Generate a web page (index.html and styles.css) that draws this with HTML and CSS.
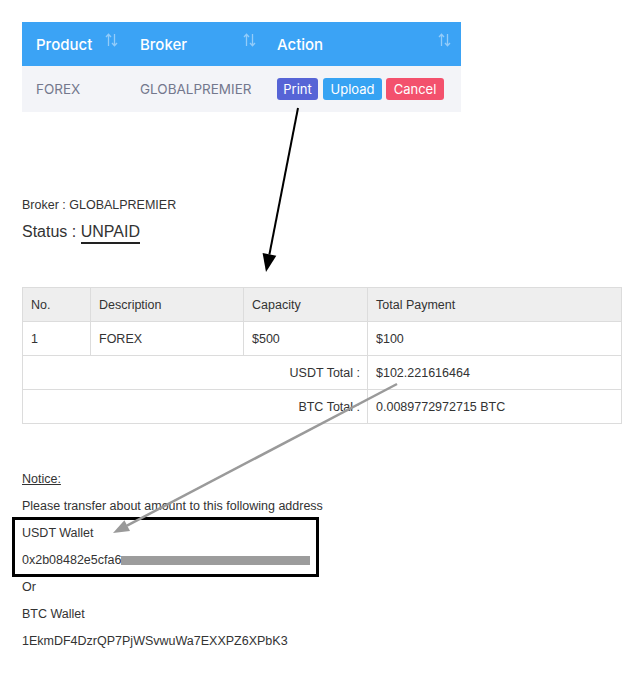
FILE: index.html
```html
<!DOCTYPE html>
<html>
<head>
<meta charset="utf-8">
<link rel="stylesheet" href="styles.css">
</head>
<body>
<div class="page">
  <table class="grid">
    <thead>
      <tr>
        <th class="c-product"><div class="th-in"><span>Product</span><svg class="sort" viewBox="0 0 13 14"><path d="M3.5 13V1.5M1 4l2.5-2.7L6 4M9.5 1v11.5M7 10l2.5 2.7L12 10"/></svg></div></th>
        <th class="c-broker"><div class="th-in"><span>Broker</span><svg class="sort" viewBox="0 0 13 14"><path d="M3.5 13V1.5M1 4l2.5-2.7L6 4M9.5 1v11.5M7 10l2.5 2.7L12 10"/></svg></div></th>
        <th class="c-action"><div class="th-in"><span>Action</span><svg class="sort" viewBox="0 0 13 14"><path d="M3.5 13V1.5M1 4l2.5-2.7L6 4M9.5 1v11.5M7 10l2.5 2.7L12 10"/></svg></div></th>
      </tr>
    </thead>
    <tbody>
      <tr>
        <td>FOREX</td>
        <td>GLOBALPREMIER</td>
        <td><div class="btns"><span class="btn btn-print">Print</span><span class="btn btn-upload">Upload</span><span class="btn btn-cancel">Cancel</span></div></td>
      </tr>
    </tbody>
  </table>

  <div class="broker">Broker : GLOBALPREMIER</div>
  <div class="status">Status : <span class="unpaid">UNPAID</span></div>

  <table class="invoice">
    <thead>
      <tr><th class="w-no">No.</th><th class="w-desc">Description</th><th class="w-cap">Capacity</th><th>Total Payment</th></tr>
    </thead>
    <tbody>
      <tr><td>1</td><td>FOREX</td><td>$500</td><td>$100</td></tr>
      <tr><td colspan="3" class="label">USDT Total :</td><td>$102.221616464</td></tr>
      <tr><td colspan="3" class="label">BTC Total :</td><td>0.0089772972715 BTC</td></tr>
    </tbody>
  </table>

  <div class="notice">
    <p><span class="u">Notice:</span></p>
    <p>Please transfer about amount to this following address</p>
    <div class="wallet-box">
      <p>USDT Wallet</p>
      <p class="addr">0x2b08482e5cfa6<span class="redact"></span></p>
    </div>
    <p>Or</p>
    <p>BTC Wallet</p>
    <p>1EkmDF4DzrQP7PjWSvwuWa7EXXPZ6XPbK3</p>
  </div>
</div>

<svg class="arrows" width="630" height="673" viewBox="0 0 630 673">
  <line x1="298" y1="108" x2="269.4" y2="254.5" stroke="#000" stroke-width="2"/>
  <polygon points="276.3,255.7 262.6,253 266,272" fill="#000"/>
  <line x1="397" y1="384" x2="127" y2="525.6" stroke="#9a9a9a" stroke-width="2.5"/>
  <polygon points="130,531 124.4,520.3 113,533" fill="#9a9a9a"/>
</svg>
</body>
</html>
```

FILE: styles.css
```css
html, body {
  margin: 0;
  padding: 0;
  background: #fff;
}
.page {
  padding: 22px 8px 40px 22px;
  font-family: "Liberation Sans", Arial, sans-serif;
  color: #333;
}
.grid {
  border-collapse: collapse;
  width: 439px;
  font-family: Inter, "Open Sans", sans-serif;
}
.grid th {
  background: #3ba3f5;
  color: #fff;
  font-weight: 500;
  font-size: 15px;
  height: 44px;
  padding: 0 0 0 14px;
  text-align: left;
}
.grid .c-product { width: 82px; padding-right: 8px; }
.grid .c-broker { width: 116px; padding-right: 7px; }
.grid .c-action { padding-right: 10px; }
.th-in {
  display: flex;
  justify-content: space-between;
  align-items: center;
}
.sort {
  width: 13px;
  height: 14px;
  fill: none;
  stroke: rgba(255,255,255,0.45);
  stroke-width: 1.3;
  margin-top: -8px;
}
.grid td {
  background: #f3f4f8;
  color: #74788d;
  font-size: 13.5px;
  height: 46px;
  padding: 0 0 0 14px;
}
.btns {
  display: flex;
  gap: 5px;
}
.btn {
  display: inline-flex;
  align-items: center;
  justify-content: center;
  height: 22px;
  border-radius: 3px;
  color: #fff;
  font-size: 13px;
  padding: 0 7px;
}
.btn-print { background: #5664d6; width: 27px; }
.btn-upload { background: #36a3f3; width: 45px; }
.btn-cancel { background: #f3516d; width: 44px; margin-left: -1px; }

.broker {
  margin-top: 85px;
  font-size: 12.5px;
  line-height: 16px;
  color: #333;
}
.status {
  margin-top: 9px;
  font-size: 16px;
  line-height: 20px;
  color: #333;
}
.unpaid {
  border-bottom: 2.5px solid #222;
  padding-bottom: 2px;
}
.invoice {
  margin-top: 45px;
  width: 600px;
  border-collapse: collapse;
  font-size: 12.5px;
  color: #333;
}
.invoice th, .invoice td {
  border: 1px solid #dcdcdc;
  text-align: left;
  font-weight: normal;
  padding: 0 8px;
  height: 33px;
}
.invoice th { background: #eeeeee; }
.invoice .w-no { width: 51px; }
.invoice .w-desc { width: 136px; }
.invoice .w-cap { width: 107px; }
.invoice td.label { text-align: right; padding-right: 7px; }

.notice {
  margin-top: 42px;
  font-size: 12.5px;
  color: #333;
}
.notice p {
  margin: 0;
  line-height: 27px;
  white-space: nowrap;
}
.u { text-decoration: underline; }
.wallet-box {
  border: 3px solid #000;
  margin: -3px 0 -3px -10px;
  padding-left: 7px;
  width: 294px;
}
.redact {
  background: #9c9c9c;
  display: inline-block;
  width: 189px;
  height: 9px;
  vertical-align: -1px;
}
.arrows {
  position: absolute;
  left: 0;
  top: 0;
  pointer-events: none;
}
```
